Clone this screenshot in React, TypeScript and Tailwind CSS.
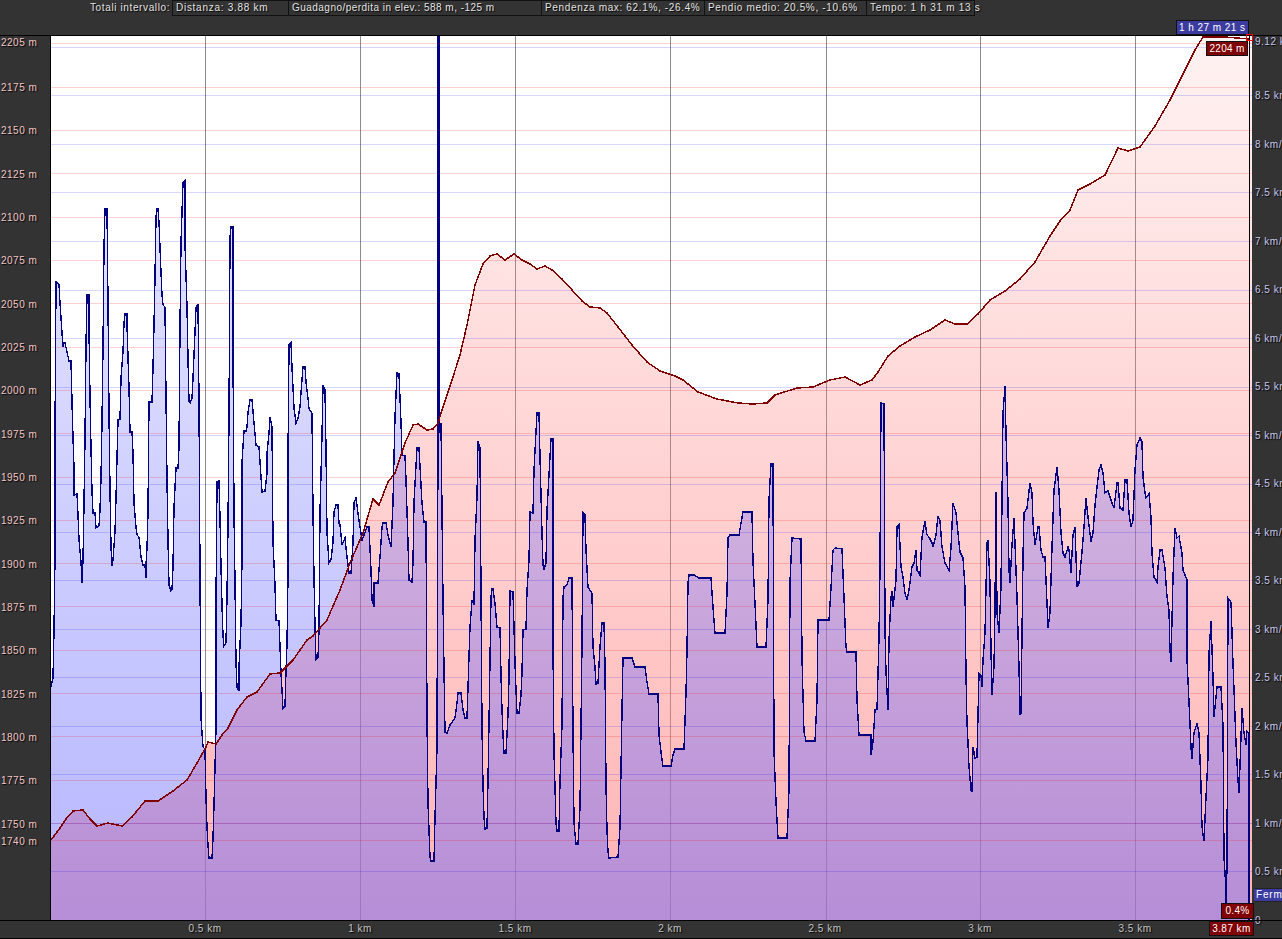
// Elevation and speed profile over distance, with interval totals on top
const statBoxes = [
  { label: 'Distanza: 3.88 km', width: 'w-[117px]', tracking: 'tracking-[0.72px]' },
  { label: 'Guadagno/perdita in elev.: 588 m, -125 m', width: 'w-[254px]', tracking: 'tracking-[0.47px]' },
  { label: 'Pendenza max: 62.1%, -26.4%', width: 'w-[164px]', tracking: 'tracking-[0.65px]' },
  { label: 'Pendio medio: 20.5%, -10.6%', width: 'w-[163px]', tracking: 'tracking-[0.65px]' },
  { label: 'Tempo: 1 h 31 m 13 s', width: 'w-[109px]', tracking: 'tracking-[0.72px]' },
];

// ticks are evenly spaced, only the first and last elevation ones break the rhythm
const elevLabels: [string, string][] = [
  ['2205 m', 'mb-[1.67px]'], ['2175 m', ''], ['2150 m', ''], ['2125 m', ''], ['2100 m', ''], ['2075 m', ''],
  ['2050 m', ''], ['2025 m', ''], ['2000 m', ''], ['1975 m', ''], ['1950 m', ''], ['1925 m', ''],
  ['1900 m', ''], ['1875 m', ''], ['1850 m', ''], ['1825 m', ''], ['1800 m', ''], ['1775 m', ''],
  ['1750 m', ''], ['1740 m', '-mt-[26.33px]'],
];

const speedLabels: [string, string][] = [
  ['9.12 km/h', 'mb-[5.5px]'], ['8.5 km/h', ''], ['8 km/h', ''], ['7.5 km/h', ''], ['7 km/h', ''], ['6.5 km/h', ''],
  ['6 km/h', ''], ['5.5 km/h', ''], ['5 km/h', ''], ['4.5 km/h', ''], ['4 km/h', ''], ['3.5 km/h', ''],
  ['3 km/h', ''], ['2.5 km/h', ''], ['2 km/h', ''], ['1.5 km/h', ''], ['1 km/h', ''], ['0.5 km/h', ''],
  ['0', ''],
];

const distLabels = ['0.5 km', '1 km', '1.5 km', '2 km', '2.5 km', '3 km', '3.5 km'];

const redLines = [43, 87, 130, 173, 217, 260, 303, 347, 390, 433, 477, 520, 563, 606, 650, 693, 736, 780, 823, 840];
const blueLines = [47, 95, 144, 192, 241, 290, 338, 387, 435, 484, 532, 580, 629, 677, 726, 774, 823, 871];
const vertLines = [205, 360, 515, 670, 826, 980, 1135];

const elevation =
  '51,840 60,828 66,819 73,811 83,810 90,819 97,826 108,823 122,826 132,817 145,801 158,801 173,791 187,780 197,763 206,747 208,742 216,744 ' +
  '222,735 228,728 237,710 247,697 257,692 270,674 280,673 293,660 307,640 313,636 327,620 340,590 350,563 363,533 373,499 379,505 ' +
  '388,482 395,473 405,443 413,425 418,424 427,430 433,429 438,423 443,407 452,380 460,355 467,325 475,285 483,264 490,256 497,254 ' +
  '505,260 514,254 522,260 530,264 537,269 545,266 552,270 562,279 572,290 582,301 590,307 600,308 607,313 618,327 632,345 647,362 ' +
  '660,371 675,376 683,380 698,392 717,399 738,403 752,404 767,403 775,395 797,388 813,387 830,380 845,377 860,385 872,380 878,372 ' +
  '888,356 900,346 915,337 930,330 945,320 955,324 967,324 978,314 990,300 1005,291 1020,279 1035,262 1050,236 1060,221 1070,210 ' +
  '1078,190 1090,184 1105,175 1118,148 1128,151 1140,147 1155,126 1170,100 1185,70 1195,50 1203,37 1225,37 1249,39';

const speed =
  '51,687 53,678 54,630 55,557 55,434 56,282 59,284 60,303 61,318 62,333 63,347 63,343 65,343 67,352 69,361 71,361 72,402 73,437 74,468 ' +
  '74,495 77,494 78,515 79,540 81,562 82,583 83,560 84,503 85,438 86,345 87,295 89,295 89,330 90,397 91,448 92,492 93,513 95,513 96,528 ' +
  '99,526 100,510 101,478 102,422 103,347 104,247 105,209 107,209 108,303 109,413 110,490 111,547 112,566 113,560 115,532 116,498 117,458 ' +
  '118,420 120,419 121,378 123,352 124,323 125,314 127,314 127,325 128,357 129,388 130,432 132,432 133,453 134,503 136,527 137,535 139,537 ' +
  '141,557 143,565 145,565 146,578 146,565 147,548 148,512 149,402 152,402 153,368 154,325 155,277 156,217 157,209 158,209 159,222 160,248 ' +
  '161,272 162,295 163,305 165,307 166,397 167,480 168,540 169,585 171,591 172,590 173,567 174,507 176,468 178,468 179,447 180,327 181,242 ' +
  '183,183 185,181 185,245 187,307 188,358 189,402 190,403 192,398 193,378 194,355 195,332 196,308 198,304 199,400 200,577 201,718 203,747 ' +
  '205,749 206,798 207,827 208,845 209,858 212,858 213,838 214,805 216,728 216,603 217,482 219,481 220,518 221,567 222,605 223,636 224,646 ' +
  '226,643 227,596 228,525 229,417 230,237 231,227 233,227 233,355 234,513 235,583 236,663 237,687 239,691 239,667 241,623 242,558 242,462 ' +
  '244,431 246,431 247,427 248,412 250,400 252,400 254,423 256,445 259,447 260,462 262,492 265,491 267,473 267,453 269,433 270,417 271,422 ' +
  '272,427 273,542 275,585 276,620 279,621 280,647 281,673 282,690 283,709 285,707 286,670 287,645 288,575 288,457 289,345 291,343 292,368 ' +
  '293,388 294,408 296,423 298,418 300,407 301,393 303,367 305,367 306,382 308,398 309,409 312,413 313,512 314,578 315,625 316,660 318,658 ' +
  '319,630 320,512 322,435 323,385 325,390 326,450 327,533 329,563 331,560 333,542 334,512 336,505 338,505 339,523 340,525 342,545 345,538 ' +
  '347,557 349,573 351,573 353,543 354,503 356,498 358,513 360,527 362,540 364,535 367,527 369,527 371,570 372,600 374,607 374,583 378,583 ' +
  '380,557 382,527 383,523 386,523 388,535 391,547 393,503 394,457 395,417 397,373 399,374 401,422 402,455 405,456 406,480 408,543 409,580 ' +
  '412,582 413,563 414,502 417,448 419,448 422,503 424,522 426,522 427,720 428,803 430,857 431,861 434,861 435,817 437,747 438,433 438,36 ' +
  '439,36 439,433 441,423 443,600 444,670 445,732 447,733 450,725 455,718 457,703 458,693 461,693 463,710 465,718 467,718 468,687 470,627 ' +
  '472,600 474,605 475,540 477,497 478,441 480,448 481,593 482,728 483,785 484,817 485,829 487,828 488,780 489,723 491,597 492,589 493,589 ' +
  '495,603 497,627 500,628 501,675 502,710 503,735 504,753 506,753 508,715 509,678 510,591 513,592 515,663 516,690 517,713 519,713 521,695 ' +
  '522,673 523,630 526,629 527,590 529,560 530,512 533,513 534,470 537,413 539,413 540,457 542,533 543,565 544,569 546,563 547,510 549,475 ' +
  '551,439 553,439 553,648 554,752 556,823 557,831 559,831 560,780 562,725 563,597 564,587 567,585 569,578 572,578 573,735 574,823 576,844 ' +
  '578,844 580,808 582,643 583,513 585,515 586,550 588,587 592,593 593,647 595,667 596,684 598,683 600,647 602,623 604,623 605,665 606,785 ' +
  '607,830 608,852 609,858 618,857 620,827 622,710 623,658 632,658 635,667 645,667 647,682 649,694 658,694 659,735 661,752 663,766 671,766 ' +
  '673,755 675,749 684,749 686,693 687,650 688,583 689,575 694,575 699,578 711,578 713,607 715,633 725,633 727,593 728,538 730,535 739,535 ' +
  '741,523 743,512 752,512 753,562 756,625 757,647 766,647 768,600 769,500 771,464 773,464 774,752 776,802 778,838 787,838 789,790 790,582 ' +
  '792,538 801,539 802,658 804,732 806,741 815,741 817,700 818,620 829,620 831,588 833,550 835,548 842,549 844,598 846,647 847,652 856,652 ' +
  '857,700 859,735 871,735 871,755 873,742 875,710 877,709 879,637 880,567 881,403 884,404 885,630 886,672 888,710 889,640 891,597 892,591 ' +
  '893,607 896,580 897,527 899,525 901,567 903,577 905,593 907,600 909,590 912,567 914,563 916,550 917,570 920,575 922,537 925,521 927,535 ' +
  '929,537 932,543 933,547 936,535 938,516 940,521 942,547 945,563 949,570 951,548 953,503 956,513 958,533 960,552 963,558 965,588 966,675 ' +
  '967,723 968,743 969,767 971,790 972,792 973,747 975,758 977,757 978,715 979,673 981,675 982,687 983,660 985,633 987,543 988,540 990,583 ' +
  '991,650 992,695 994,667 995,607 996,492 997,613 999,633 1001,587 1002,500 1003,413 1005,386 1006,433 1008,503 1009,570 1010,583 1012,545 ' +
  '1014,518 1016,570 1017,597 1019,667 1020,715 1021,713 1023,557 1024,513 1027,508 1030,483 1032,493 1033,523 1035,545 1038,527 1039,527 ' +
  '1041,550 1043,557 1045,557 1047,603 1048,628 1050,613 1052,547 1054,490 1057,467 1059,490 1061,533 1063,553 1065,557 1068,547 1069,550 ' +
  '1071,573 1073,535 1075,527 1077,587 1079,583 1082,552 1084,527 1086,498 1088,517 1091,542 1093,533 1095,505 1097,487 1099,470 1101,465 ' +
  '1103,473 1105,493 1108,491 1112,503 1114,508 1117,483 1118,483 1120,508 1123,510 1125,480 1127,480 1129,513 1131,527 1133,520 1135,470 ' +
  '1137,445 1140,438 1142,442 1143,477 1145,493 1146,498 1149,494 1151,517 1152,553 1154,577 1157,582 1158,567 1160,550 1162,550 1165,568 ' +
  '1167,597 1169,610 1170,650 1171,662 1173,577 1175,528 1177,538 1179,536 1182,553 1183,570 1187,580 1187,660 1189,702 1191,747 1192,759 ' +
  '1194,733 1197,723 1199,733 1201,785 1202,827 1204,841 1206,797 1208,757 1209,653 1211,621 1213,677 1214,717 1217,687 1219,687 1221,687 ' +
  '1223,725 1224,857 1226,890 1226,903 1227,867 1228,598 1231,602 1233,663 1236,743 1238,780 1239,793 1241,737 1242,708 1244,733 1246,745 ' +
  '1247,731 1249,733 1249,867 1249,920';

const shadowed = '[text-shadow:1px_1px_1px_#000]';

function ProfileChart() {
  return (
    <svg viewBox="51 36 1201 884" className="block h-full w-full bg-white">
      <defs>
        <linearGradient id="elevFill" gradientUnits="userSpaceOnUse" x1="0" y1="36" x2="0" y2="920">
          <stop offset="0" stopColor="#ff8080" stopOpacity="0.1" />
          <stop offset="1" stopColor="#ff8080" stopOpacity="0.6" />
        </linearGradient>
        <linearGradient id="speedFill" gradientUnits="userSpaceOnUse" x1="0" y1="36" x2="0" y2="920">
          <stop offset="0" stopColor="#6666ff" stopOpacity="0.12" />
          <stop offset="1" stopColor="#6666ff" stopOpacity="0.48" />
        </linearGradient>
      </defs>

      {vertLines.map((x) => (
        <line key={x} x1={x + 0.5} y1="36" x2={x + 0.5} y2="920" stroke="#8c8c8c" />
      ))}

      <polygon points={`${elevation} 1252,40 1252,920 51,920`} fill="url(#elevFill)" />
      <polygon points={`${speed} 51,920`} fill="url(#speedFill)" />

      {redLines.map((y) => (
        <line key={y} x1="51" y1={y + 0.5} x2="1252" y2={y + 0.5} stroke="#ff0000" strokeOpacity="0.18" />
      ))}
      {blueLines.map((y) => (
        <line key={y} x1="51" y1={y + 0.5} x2="1252" y2={y + 0.5} stroke="#0000ff" strokeOpacity="0.16" />
      ))}

      {/* cursor line, the speed trace takes over below it */}
      <line x1="1249.5" y1="36" x2="1249.5" y2="735" stroke="#000" />
      <polyline points={speed} fill="none" stroke="#000080" strokeWidth="1.4" shapeRendering="crispEdges" />
      <polyline points={elevation} fill="none" stroke="#800000" strokeWidth="1.5" shapeRendering="crispEdges" />
    </svg>
  );
}

export default function App() {
  return (
    <div className="relative flex h-[939px] w-[1282px] flex-col overflow-hidden bg-[#333333] font-['Liberation_Sans',Arial,sans-serif] text-[10px] text-[#e4e4e4]">
      <div className="flex h-[36px] shrink-0 items-start border-b border-black pl-[90px]">
        <span className={`w-[83px] shrink-0 whitespace-nowrap leading-[15px] tracking-[0.62px] ${shadowed}`}>Totali intervallo:</span>
        {statBoxes.map((box) => (
          <div
            key={box.label}
            className={`${box.width} ${box.tracking} -ml-px h-[16px] shrink-0 whitespace-nowrap border border-[#111] pl-[3px] leading-[14px] ${shadowed}`}
          >
            {box.label}
          </div>
        ))}
      </div>

      <div className="flex h-[884px] shrink-0">
        <div className="flex w-[50px] shrink-0 flex-col gap-[31.33px] pl-[1px] pt-[1px] text-[#f5c8c8]">
          {elevLabels.map(([text, extra]) => (
            <span key={text} className={`h-[12px] shrink-0 whitespace-nowrap leading-[12px] tracking-[0.5px] ${shadowed} ${extra}`}>
              {text}
            </span>
          ))}
        </div>
        <div className="h-full w-[1202px] shrink-0 border-l border-black">
          <ProfileChart />
        </div>
        <div className="flex min-w-0 flex-1 flex-col gap-[36.5px] pl-[3px] text-[#c8c8ee]">
          {speedLabels.map(([text, extra]) => (
            <span key={text} className={`h-[12px] shrink-0 whitespace-nowrap leading-[12px] tracking-[0.5px] ${shadowed} ${extra}`}>
              {text}
            </span>
          ))}
        </div>
      </div>

      <div className="grid flex-1 grid-cols-[repeat(7,155px)] border-y border-black pl-[127.5px] pt-[2px] text-center text-[#c4c4c4]">
        {distLabels.map((text) => (
          <span key={text} className={`leading-[12px] tracking-[0.5px] ${shadowed}`}>
            {text}
          </span>
        ))}
      </div>

      {/* cursor readouts sit over the chart */}
      <div className="absolute left-[1176px] top-[20px] h-[15px] w-[73px] whitespace-nowrap border border-[#111] bg-[#3c3ca0] pl-[2px] leading-[13px] tracking-[0.45px] text-white">1 h 27 m 21 s</div>
      <div className="absolute left-[1206px] top-[41px] h-[15px] w-[42px] whitespace-nowrap border border-[#111] bg-[#800000] text-center leading-[13px] tracking-[0.3px] text-white">2204 m</div>
      <div className="absolute left-[1246px] top-[34px] h-[7px] w-[7px] border border-[#ff0000]" />
      <div className="absolute left-[1254px] top-[888px] h-[14px] w-[28px] overflow-hidden border-y border-[#222] bg-[#3c3ca0] pl-[2px] leading-[12px] tracking-[0.8px] text-white">Fermo</div>
      <div className="absolute left-[1221px] top-[903px] h-[16px] w-[33px] border border-[#111] bg-[#800000] text-center leading-[14px] tracking-[0.3px] text-white">0.4%</div>
      <div className="absolute left-[1209px] top-[921px] h-[15px] w-[45px] whitespace-nowrap border border-[#111] bg-[#800000] text-center leading-[13px] tracking-[0.45px] text-white">3.87 km</div>
    </div>
  );
}
